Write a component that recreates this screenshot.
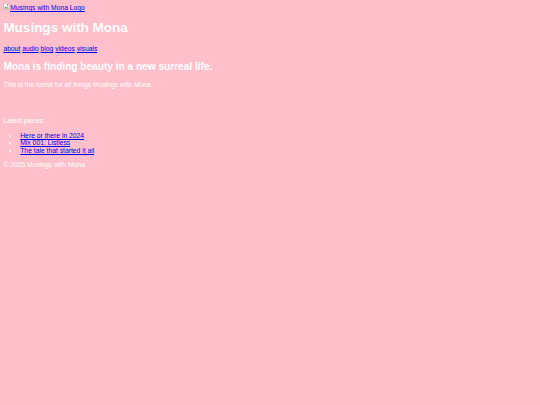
import React from "react";

function BrokenImg() {
  return (
    <svg width="6.75" height="6.75" viewBox="0 0 16 16" className="inline-block align-baseline">
      <rect x="0.5" y="0.5" width="15" height="15" fill="#f4f4f4" stroke="#999" />
      <path d="M2 13 L6 8 L9 11 L11 9 L14 13 Z" fill="#6aa84f" />
      <circle cx="11" cy="5" r="2" fill="#e06666" />
    </svg>
  );
}

export default function App() {
  const link = "text-[#0000ee] underline";
  return (
    <div className="min-h-[405px] bg-[#ffc0cb] p-[3.375px] text-white text-[6.75px] leading-[normal] font-['Liberation_Sans',Arial,sans-serif]">
      <div>
        <a href="#" className={link}>
          <BrokenImg />
          Musings with Mona Logo
        </a>
      </div>
      <h1 className="mt-[9.05px] mb-[10px] text-[13.5px] font-bold">Musings with Mona</h1>
      <div>
        <a href="#" className={link}>about</a>{" "}
        <a href="#" className={link}>audio</a>{" "}
        <a href="#" className={link}>blog</a>{" "}
        <a href="#" className={link}>videos</a>{" "}
        <a href="#" className={link}>visuals</a>
      </div>
      <h2 className="mt-[8.4px] mb-[9.5px] text-[10.125px] font-bold">Mona is finding beauty in a new surreal life.</h2>
      <p className="my-[6.75px]">This is the home for all things Musings with Mona.</p>
      <div className="h-[15px]"></div>
      <p className="my-[6.75px]">Latest pieces:</p>
      <ul className="mt-[8.25px] mb-[6px] list-disc pl-[16.875px] leading-[7.6px]">
        <li><a href="#" className={link}>Here or there in 2024</a></li>
        <li><a href="#" className={link}>Mix 001: Listless</a></li>
        <li><a href="#" className={link}>The tale that started it all</a></li>
      </ul>
      <p className="my-[6.75px]">© 2025 Musings with Mona</p>
    </div>
  );
}
